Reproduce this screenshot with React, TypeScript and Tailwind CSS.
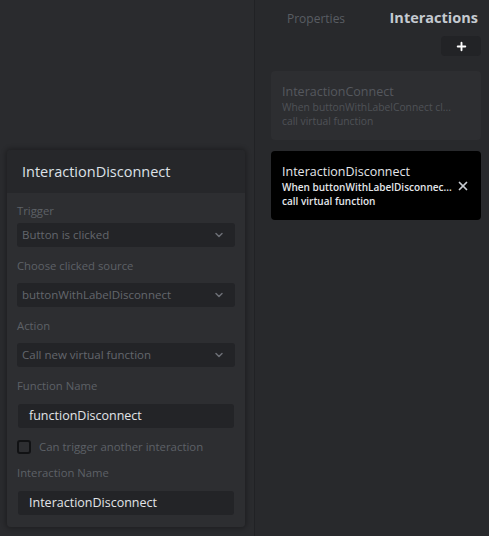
import { ChevronDown, Plus, X } from 'lucide-react';

const font = { fontFamily: '"Open Sans", "Noto Sans", sans-serif' };

function Select({ value }: { value: string }) {
  return (
    <div className="h-6 rounded-[3px] bg-[#232427] flex items-center justify-between pl-[5px] pr-[10px]">
      <span className="text-[11.5px] text-[#64676d]">{value}</span>
      <ChevronDown className="w-3 h-3 text-[#6b6e74]" strokeWidth={3} />
    </div>
  );
}

function Label({ children, gap = 'mb-[9px]' }: { children: string; gap?: string }) {
  return <div className={`text-[11.3px] text-[#5d6167] leading-4 ${gap}`}>{children}</div>;
}

export default function App() {
  return (
    <div className="w-[489px] h-[536px] flex bg-[#2a2b2e] overflow-hidden" style={font}>
      {/* Editor side */}
      <div className="w-[254px] shrink-0 pt-[150px]">
        <div className="ml-[7px] w-[238px] rounded-[4px] shadow-[0_0_4px_2px_rgba(0,0,0,0.25)] overflow-hidden">
          <div className="h-[43px] bg-[#26272a] flex items-center pl-[15px] text-[14.5px] text-[#dde1e7]">
            InteractionDisconnect
          </div>
          <div className="bg-[#2d2e31] px-[10px] pt-[10px] pb-[12px] flex flex-col">
            <Label gap="mb-[4px]">Trigger</Label>
            <Select value="Button is clicked" />
            <div className="h-[11px]" />
            <Label>Choose clicked source</Label>
            <Select value="buttonWithLabelDisconnect" />
            <div className="h-[11px]" />
            <Label>Action</Label>
            <Select value="Call new virtual function" />
            <div className="h-[11px]" />
            <Label gap="mb-[10px]">Function Name</Label>
            <div className="mx-[1px] h-6 rounded-[3px] bg-[#232427] flex items-center pl-[11px] text-[12.5px] text-[#e2e4e8]">
              functionDisconnect
            </div>
            <div className="flex items-center gap-[8px] h-[14px] mt-[12px] mb-[11px]">
              <div className="w-[14px] h-[14px] rounded-[3px] border-2 border-[#111214]" />
              <span className="text-[11.4px] leading-[14px] text-[#5d6167]">Can trigger another interaction</span>
            </div>
            <Label gap="mb-[10px]">Interaction Name</Label>
            <div className="mx-[1px] h-6 rounded-[3px] bg-[#232427] flex items-center pl-[11px] text-[12.5px] text-[#e2e4e8]">
              InteractionDisconnect
            </div>
          </div>
        </div>
      </div>

      {/* Sidebar */}
      <div className="flex-1 border-l border-[#212225] bg-[#28292c] pl-[16px] pr-[8px]">
        <div className="flex items-end h-[29px] pl-[16px]">
          <span className="text-[12px] text-[#595d63] mb-[1px]">Properties</span>
          <span className="ml-auto mr-[3px] text-[14.5px] font-bold text-[#c5cad1]">Interactions</span>
        </div>
        <div className="flex justify-end mt-[7px]">
          <div className="w-[40px] h-[20px] rounded-[4px] bg-[#222326] flex items-center justify-center">
            <Plus className="w-[13px] h-[13px] text-white" strokeWidth={3.5} />
          </div>
        </div>
        <div className="mt-[15px] h-[69px] rounded-[4px] bg-[#2d2e31] px-[11px] pt-[13px] leading-[14px]">
          <div className="text-[12.5px] text-[#55585e] leading-[16px]">InteractionConnect</div>
          <div className="text-[10.3px] text-[#4f5257]">When buttonWithLabelConnect cl...</div>
          <div className="text-[10.3px] text-[#4f5257]">call virtual function</div>
        </div>
        <div className="mt-[11px] h-[69px] rounded-[4px] bg-black pl-[11px] pr-[11px] pt-[13px] leading-[14px] flex">
          <div className="flex-1 whitespace-nowrap">
            <div className="text-[12.5px] text-[#e4e6ea] leading-[16px]">InteractionDisconnect</div>
            <div className="text-[10px] font-semibold text-[#e4e6ea]">When buttonWithLabelDisconnec...</div>
            <div className="text-[10px] font-semibold text-[#e4e6ea]">call virtual function</div>
          </div>
          <X className="w-[14px] h-[14px] text-[#c8ccd2] mt-[15px]" strokeWidth={3} />
        </div>
      </div>
    </div>
  );
}
